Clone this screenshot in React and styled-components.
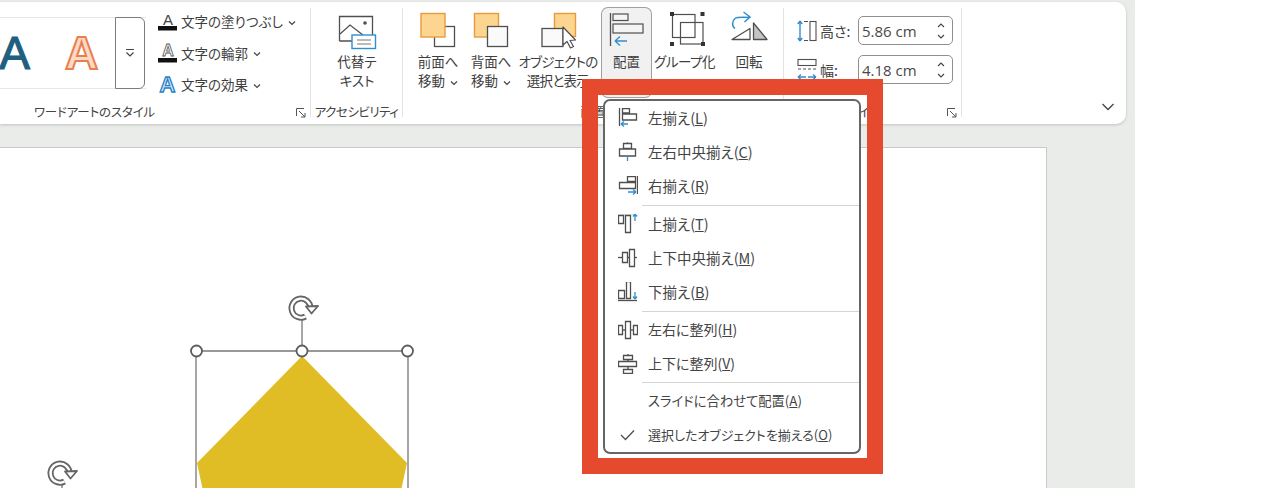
import React from "react";
import styled, { createGlobalStyle } from "styled-components";

const Global = createGlobalStyle`
  html, body { margin: 0; padding: 0; background: #fff; }
  body { font-family: "Noto Sans CJK JP", "Noto Sans", sans-serif; font-feature-settings: "palt"; }
  #root { width: 1280px; height: 488px; overflow: hidden; }
`;

const Page = styled.div`
  position: relative; width: 1280px; height: 488px; overflow: hidden; background: #fff; display: flex;
`;
const Workspace = styled.div`
  width: 1135px; height: 488px; background: #e9ece9; display: flex; flex-direction: column; padding-top: 2px; box-sizing: border-box;
`;
const Ribbon = styled.div`
  width: 1126px; height: 122px; flex: none; background: #fff; border-radius: 0 10px 10px 0;
  box-shadow: 0 1px 3px rgba(0,0,0,.18); display: flex; padding: 6px 0 7px; box-sizing: border-box; overflow: hidden; color: #3c3c3c;
`;
const Group = styled.section`
  position: relative; width: ${p => p.$w}px; flex: none; display: flex; flex-direction: column; box-sizing: border-box;
  border-right: ${p => p.$last ? "0" : "1.5px solid #e3e3e3"};
`;
const Content = styled.div`
  flex: 1; display: flex; min-height: 0; padding-left: ${p => p.$pl || 0}px;
`;
const GroupLabel = styled.div`
  font-size: 12.5px; line-height: 18px; height: 18px; margin-bottom: -4px; text-align: center; white-space: nowrap;
  padding-right: ${p => p.$pr || 0}px; letter-spacing: ${p => p.$ls || 0}px; color: #444;
`;
const Launcher = styled.svg`
  position: absolute; right: 4px; bottom: -1px; width: 10px; height: 10px;
`;
const Gallery = styled.div`
  margin: 9px 0 0 -19px; width: 165px; height: 72px; flex: none; display: flex; box-sizing: border-box;
  border-top: 1px solid #e6e6e6; border-bottom: 1px solid #e6e6e6;
`;
const GalleryCell = styled.div`
  width: 67px; flex: none; display: flex; align-items: center; justify-content: center;
  font-family: "Liberation Sans", sans-serif; font-size: 46px; font-weight: ${p => p.$outline ? 700 : 400};
  color: ${p => p.$outline ? "#fcd9c3" : "#1f5f80"};
  -webkit-text-stroke: ${p => p.$outline ? "2px #e87f50" : "1.2px #1f5f80"};
`;
const GalleryMore = styled.div`
  width: 30px; height: 72px; margin-top: -1px; flex: none; box-sizing: border-box; background: #fff;
  border: 1.5px solid #7c7c7c; border-radius: 0 6px 6px 0; display: flex; align-items: center; justify-content: center;
`;
const Commands = styled.div`
  margin: -1px 0 0 12px; display: flex; flex-direction: column;
`;
const Command = styled.div`
  height: 31.5px; display: flex; align-items: center; font-size: 13.5px; white-space: nowrap; color: #3e3e3e;
`;
const CommandText = styled.span`
  margin-top: -3px;
`;
const CommandIcon = styled.svg`
  width: 20px; height: 22px; margin-right: 3px; flex: none; overflow: visible;
`;
const Caret = styled.svg`
  width: 8px; height: 6px; margin-left: 5px; flex: none;
`;
const BigButton = styled.div`
  width: ${p => p.$w}px; height: 89px; flex: none; display: flex; flex-direction: column; align-items: center; box-sizing: border-box;
  ${p => p.$active ? "background:#f1f1f1; border-radius:6px; box-shadow:0 0 0 1px #a0a0a0;" : ""}
`;
const BigIcon = styled.svg`
  width: ${p => p.$w}px; height: 44px; flex: none;
`;
const BigLabel = styled.div`
  font-size: 13.5px; line-height: 19px; text-align: center; white-space: nowrap; color: #3e3e3e;
  letter-spacing: ${p => p.$ls || 0}px;
`;
const SizeColumn = styled.div`
  padding: 8px 0 0 13px; display: flex; flex-direction: column; gap: 10px;
`;
const SizeRow = styled.div`
  height: 29px; display: flex; align-items: center;
`;
const SizeIcon = styled.svg`
  width: 20px; height: 26px; flex: none; margin-right: 3px;
`;
const SizeLabel = styled.div`
  width: 38px; flex: none; font-size: 14px; color: #3e3e3e;
`;
const Spin = styled.div`
  width: 95px; height: 29px; box-sizing: border-box; border: 1.5px solid #8f8f8f; border-radius: 5px; display: flex;
  align-items: center; justify-content: space-between; padding: 0 6px 0 3px;
  font-family: "Open Sans", sans-serif; font-size: 15px; color: #484848;
`;
const SpinArrows = styled.svg`
  width: 10px; height: 22px;
`;
const Collapse = styled.div`
  flex: 1; display: flex; align-items: flex-end; justify-content: flex-end; padding: 0 11px 6px 0;
`;
const Slide = styled.div`
  position: relative; width: 1047px; flex: 1; margin-top: 23px; background: #fff; box-sizing: border-box;
  border-top: 1px solid #c9c9c9; border-right: 1px solid #c9c9c9;
`;
const Shapes = styled.svg`
  position: absolute; left: 0; top: -148px; width: 1047px; height: 488px;
`;
const Highlight = styled.div`
  position: absolute; left: 582px; top: 79px; width: 301px; height: 395px; box-sizing: border-box;
  border: 16px solid #e64a2e; padding: 4px 6px 0 5px;
`;
const Menu = styled.div`
  background: #fff; border: 2px solid #666; border-radius: 7px; color: #444; box-sizing: border-box;
`;
const Item = styled.div`
  height: 34px; display: flex; align-items: center; padding-left: 13px; white-space: nowrap;
`;
const ItemIcon = styled.svg`
  width: 20px; height: 20px; flex: none; margin-right: 11px;
  path { stroke-width: 1.3; }
`;
const ItemText = styled.span`
  font-size: ${p => p.$fs}px; margin: -2px 0 0 -1px;
`;
const Rule = styled.div`
  height: 1px; background: #d4d4d4; margin: ${p => p.$t}px 0 ${p => p.$b}px 37px;
`;

const G = "#4f4f4f";
const B = "#2f8fcf";
const O = "#e99a3c";
const OF = "#fcd690";

const Chev = () => (
  <Caret viewBox="0 0 8 6"><path d="M1 1.5 4 4.5 7 1.5" fill="none" stroke="#444" strokeWidth="1.2" /></Caret>
);

const items = [
  { t: "左揃え", k: "L", y: 118, fs: 14.5, d: <><path d="M619.5 108v18" stroke={G} /><path d="M622.5 108.5h7v4.5h-7zM622.5 114h14v6h-14z" fill="#fff" stroke={G} /><path d="M621 124h7M621 124l3-2.5M621 124l3 2.5" stroke={B} fill="none" /></> },
  { t: "左右中央揃え", k: "C", y: 152, fs: 14.5, d: <><path d="M623.5 143.5h8v5h-8zM619.5 149h16v7h-16z" fill="#fff" stroke={G} /><path d="M627.5 156v5M627.5 142v1" stroke={B} /></> },
  { t: "右揃え", k: "R", y: 186, fs: 14.5, d: <><path d="M637.5 176v18" stroke={G} /><path d="M627.5 176.5h8v5h-8zM619.5 182.5h16v6h-16z" fill="#fff" stroke={G} /><path d="M628 192h8M636 192l-3-2.5M636 192l-3 2.5" stroke={B} fill="none" /></> },
  { t: "上揃え", k: "T", y: 224, fs: 14.5, d: <><path d="M618 213.5h17" stroke={G} /><path d="M618.5 215.5h5v8h-5zM625.5 215.5h5v17h-5z" fill="#fff" stroke={G} /><path d="M635 221v-7M635 214l-2 2.5M635 214l2 2.500" stroke={B} fill="none" /></> },
  { t: "上下中央揃え", k: "M", y: 258, fs: 14.5, d: <><path d="M618 257.5h19" stroke={G} /><path d="M622.5 252.5h5v10h-5zM629.5 249.5h5v17h-5z" fill="#fff" stroke={G} /></> },
  { t: "下揃え", k: "B", y: 292, fs: 14.5, d: <><path d="M618 300.5h19" stroke={G} /><path d="M618.5 290.5h6v8h-6zM626.5 281.5h4v17h-4z" fill="#fff" stroke={G} /><path d="M635 292v7M635 299l-2-2.500M635 299l2-2.500" stroke={B} fill="none" /></> },
  { t: "左右に整列", k: "H", y: 330, fs: 14, d: <><path d="M618 330h20" stroke={G} /><path d="M618.5 325.5h4v9h-4zM625.5 321.5h5v17h-5zM633.5 325.5h4v9h-4z" fill="#fff" stroke={G} /></> },
  { t: "上下に整列", k: "V", y: 364, fs: 14, d: <><path d="M628 354v20" stroke={G} /><path d="M623.5 355.5h9v4h-9zM618.5 361.5h18v5h-18zM623.5 369.5h9v4h-9z" fill="#fff" stroke={G} /></> },
  { t: "スライドに合わせて配置", k: "A", y: 401, fs: 13.3 },
  { t: "選択したオブジェクトを揃える", k: "O", y: 435, fs: 13, d: <path d="M621 435l4.5 4.5 8.5-9" stroke={G} fill="none" /> },
];

const MenuItem = ({ it }) => (
  <Item>
    <ItemIcon viewBox={`618 ${it.y - 10} 20 20`}>{it.d}</ItemIcon>
    <ItemText $fs={it.fs}>{it.t}(<u>{it.k}</u>)</ItemText>
  </Item>
);

const Rotate = ({ x, y }) => (
  <g transform={`translate(${x} ${y})`}>
    <path d="M4.500 8.500A9.500 9.500 0 1 1 9.500 0" fill="none" stroke="#666" strokeWidth="6" />
    <path d="M4.500 8.500A9.500 9.500 0 1 1 9.500 0" fill="none" stroke="#fff" strokeWidth="2.400" />
    <path d="M5 -1.500 17 -2 10.500 5.500Z" fill="#fff" stroke="#666" strokeWidth="1.800" strokeLinejoin="round" />
  </g>
);

const LauncherIcon = () => (
  <Launcher viewBox="0 0 10 10"><path d="M.5 8V.5H8M3 3l6 6M5 9h4V5" fill="none" stroke="#555" /></Launcher>
);

export default function App() {
  return (
    <Page>
      <Global />
      <Workspace>
        <Ribbon>
          <Group $w={311}>
            <Content>
              <Gallery>
                <GalleryCell>A</GalleryCell>
                <GalleryCell $outline>A</GalleryCell>
                <GalleryMore>
                  <svg width="10" height="10" viewBox="0 0 10 10"><path d="M1 1.5h8M1.5 4.5 5 8l3.5-3.5" fill="none" stroke="#444" strokeWidth="1.2" /></svg>
                </GalleryMore>
              </Gallery>
              <Commands>
                <Command>
                  <CommandIcon viewBox="0 0 20 22"><text x="10" y="13" textAnchor="middle" fontSize="15" fontFamily="Liberation Sans" fill="#444">A</text><rect x="0" y="14" width="19" height="4.500" fill="#111" /></CommandIcon>
                  <CommandText>文字の塗りつぶし</CommandText><Chev />
                </Command>
                <Command>
                  <CommandIcon viewBox="0 0 20 22"><text x="10" y="13" textAnchor="middle" fontSize="16" fontFamily="Liberation Sans" fontWeight="700" fill="#fff" stroke="#555" strokeWidth=".8">A</text><rect x="0" y="15" width="19" height="4.500" fill="#111" /></CommandIcon>
                  <CommandText>文字の輪郭</CommandText><Chev />
                </Command>
                <Command>
                  <CommandIcon viewBox="0 0 20 22"><text x="9.500" y="17" textAnchor="middle" fontSize="22" fontFamily="Liberation Sans" fontWeight="700" fill="#cfe6f7" stroke="#2a7fc4" strokeWidth="1.300">A</text></CommandIcon>
                  <CommandText>文字の効果</CommandText><Chev />
                </Command>
              </Commands>
            </Content>
            <GroupLabel $pr={121} $ls={-0.2}>ワードアートのスタイル</GroupLabel>
            <LauncherIcon />
          </Group>
          <Group $w={92}>
            <Content>
              <BigButton $w={92}>
                <BigIcon $w={92} viewBox="311 8 92 44">
                  <path d="M339.5 41V16.5h33V35" fill="#fff" stroke={G} strokeWidth="1.3" />
                  <path d="M339.5 41h14" stroke={G} strokeWidth="1.3" />
                  <path d="M340 34l10-9 9 7 4 3" fill="none" stroke={G} strokeWidth="1.2" />
                  <circle cx="365" cy="23" r="1.8" fill={G} />
                  <rect x="352" y="35" width="23.5" height="13.5" fill="#fff" stroke={B} strokeWidth="1.4" />
                  <path d="M357 40h14M357 44h14" stroke="#777" />
                </BigIcon>
                <BigLabel>代替テ<br />キスト</BigLabel>
              </BigButton>
            </Content>
            <GroupLabel $ls={-0.5}>アクセシビリティ</GroupLabel>
          </Group>
          <Group $w={381}>
            <Content $pl={5}>
              <BigButton $w={60}>
                <BigIcon $w={60} viewBox="408 8 60 44">
                  <rect x="434.5" y="26.5" width="20" height="20" fill="#fff" stroke={G} strokeWidth="1.3" />
                  <rect x="421" y="13.5" width="24" height="23.5" fill={OF} stroke={O} strokeWidth="1.4" />
                </BigIcon>
                <BigLabel>前面へ<br />移動<Chev /></BigLabel>
              </BigButton>
              <BigButton $w={46}>
                <BigIcon $w={46} viewBox="468 8 46 44">
                  <rect x="474.5" y="13.5" width="24" height="23.5" fill={OF} stroke={O} strokeWidth="1.4" />
                  <rect x="487.5" y="26.5" width="20" height="20" fill="#fafafa" stroke={G} strokeWidth="1.3" />
                </BigIcon>
                <BigLabel>背面へ<br />移動<Chev /></BigLabel>
              </BigButton>
              <BigButton $w={88}>
                <BigIcon $w={88} viewBox="514 8 88 44">
                  <rect x="554.5" y="13.5" width="21" height="23" fill={OF} stroke={O} strokeWidth="1.4" />
                  <rect x="542" y="28.5" width="21" height="18" fill="#fafafa" stroke={G} strokeWidth="1.3" />
                  <path d="M563 27v18l4-3.5 3.5 6.5 3-1.5-3.5-6 5.500-.5Z" fill="#fff" stroke={G} strokeWidth="1.2" strokeLinejoin="round" />
                </BigIcon>
                <BigLabel $ls={-0.7}>オブジェクトの<br />選択と表示</BigLabel>
              </BigButton>
              <BigButton $w={49} $active>
                <BigIcon $w={49} viewBox="602 8 49 44">
                  <path d="M610.5 13v33" stroke={G} strokeWidth="1.3" />
                  <rect x="613" y="14" width="15" height="6.5" fill="#f4f4f4" stroke={G} strokeWidth="1.2" />
                  <rect x="613" y="24" width="30" height="9" fill="#f4f4f4" stroke={G} strokeWidth="1.2" />
                  <path d="M615 41h12M615 41l5-4.5M615 41l5 4.5" fill="none" stroke={B} strokeWidth="1.3" />
                </BigIcon>
                <BigLabel>配置<br /><Chev /></BigLabel>
              </BigButton>
              <BigButton $w={67}>
                <BigIcon $w={67} viewBox="651 8 67 44">
                  <rect x="672.5" y="14.500" width="22.500" height="23" fill="none" stroke={G} strokeWidth="1.200" />
                  <rect x="680.500" y="22.500" width="22.500" height="21.500" fill="none" stroke={G} strokeWidth="1.200" />
                  <path d="M670 12h4v4h-4zM700.500 12h4v4h-4zM670 42h4v4h-4zM701 42h4v4h-4z" fill="#333" />
                </BigIcon>
                <BigLabel $ls={-0.5}>グループ化<br /><Chev /></BigLabel>
              </BigButton>
              <BigButton $w={62}>
                <BigIcon $w={62} viewBox="718 8 62 44">
                  <path d="M750 28.500V39.500H732Z" fill="#fff" stroke={G} strokeWidth="1.3" strokeLinejoin="round" />
                  <path d="M753.500 23l13.500 16.500h-13.500Z" fill="#c4c4c4" stroke={G} strokeWidth="1.3" strokeLinejoin="round" />
                  <path d="M735 28.500c-3.500-2.500-3-7.500 0-10 2-1.500 5-1.500 14.500-1M743.500 12l6.500 5-5.500 5" fill="none" stroke={B} strokeWidth="1.500" />
                </BigIcon>
                <BigLabel>回転<br /><Chev /></BigLabel>
              </BigButton>
            </Content>
            <GroupLabel>配置</GroupLabel>
          </Group>
          <Group $w={178}>
            <SizeColumn>
              <SizeRow>
                <SizeIcon viewBox="0 0 20 26">
                  <path d="M3 3v20M3 3 .8 6M3 3l2.200 3M3 23 .8 20M3 23l2.200-3" stroke={B} strokeWidth="1.4" fill="none" />
                  <path d="M7 3.500h4M7 22.500h4" stroke={G} />
                  <rect x="13" y="3.500" width="6" height="19" fill="#fff" stroke={G} strokeWidth="1.1" />
                </SizeIcon>
                <SizeLabel>高さ:</SizeLabel>
                <Spin>5.86 cm<SpinArrows viewBox="0 0 10 22"><path d="M2 7l3-3 3 3M2 15l3 3 3-3" fill="none" stroke="#444" strokeWidth="1.1" /></SpinArrows></Spin>
              </SizeRow>
              <SizeRow>
                <SizeIcon viewBox="0 0 20 26">
                  <rect x="1" y="2.500" width="18" height="6" fill="#fff" stroke={G} strokeWidth="1.1" />
                  <path d="M1 12h18" stroke={G} strokeDasharray="3 2" />
                  <path d="M1 20h8M1 20l3-2.500M1 20l3 2.500M11 20h8M19 20l-3-2.500M19 20l-3 2.500" stroke={B} strokeWidth="1.3" fill="none" />
                </SizeIcon>
                <SizeLabel>幅:</SizeLabel>
                <Spin>4.18 cm<SpinArrows viewBox="0 0 10 22"><path d="M2 7l3-3 3 3M2 15l3 3 3-3" fill="none" stroke="#444" strokeWidth="1.1" /></SpinArrows></Spin>
              </SizeRow>
            </SizeColumn>
            <Content />
            <GroupLabel $pr={18}>サイズ</GroupLabel>
            <LauncherIcon />
          </Group>
          <Collapse>
            <svg width="14" height="8" viewBox="0 0 14 8"><path d="M1.500 1 7 6.500 12.500 1" fill="none" stroke="#444" strokeWidth="1.300" /></svg>
          </Collapse>
        </Ribbon>
        <Slide>
          <Shapes viewBox="0 0 1047 488">
            <path d="M302 356 407 463 386 560H218L197 463Z" fill="#e0bc25" />
            <path d="M302 320V345M196 351H408M196 351V488M408 351V488M62 484V490" stroke="#777" strokeWidth="1.300" fill="none" />
            <circle cx="196.500" cy="351" r="5.500" fill="#fff" stroke="#5c5c5c" strokeWidth="1.800" />
            <circle cx="302" cy="351" r="5.500" fill="#fff" stroke="#5c5c5c" strokeWidth="1.800" />
            <circle cx="407.500" cy="351" r="5.500" fill="#fff" stroke="#5c5c5c" strokeWidth="1.800" />
            <Rotate x={301} y={308} />
            <Rotate x={60} y={473} />
          </Shapes>
        </Slide>
      </Workspace>
      <Highlight>
        <Menu>
          {items.slice(0, 3).map(it => <MenuItem key={it.k} it={it} />)}
          <Rule $t={2} $b={1} />
          {items.slice(3, 6).map(it => <MenuItem key={it.k} it={it} />)}
          <Rule $t={2} $b={1} />
          {items.slice(6, 8).map(it => <MenuItem key={it.k} it={it} />)}
          <Rule $t={1} $b={1} />
          {items.slice(8).map(it => <MenuItem key={it.k} it={it} />)}
        </Menu>
      </Highlight>
    </Page>
  );
}
